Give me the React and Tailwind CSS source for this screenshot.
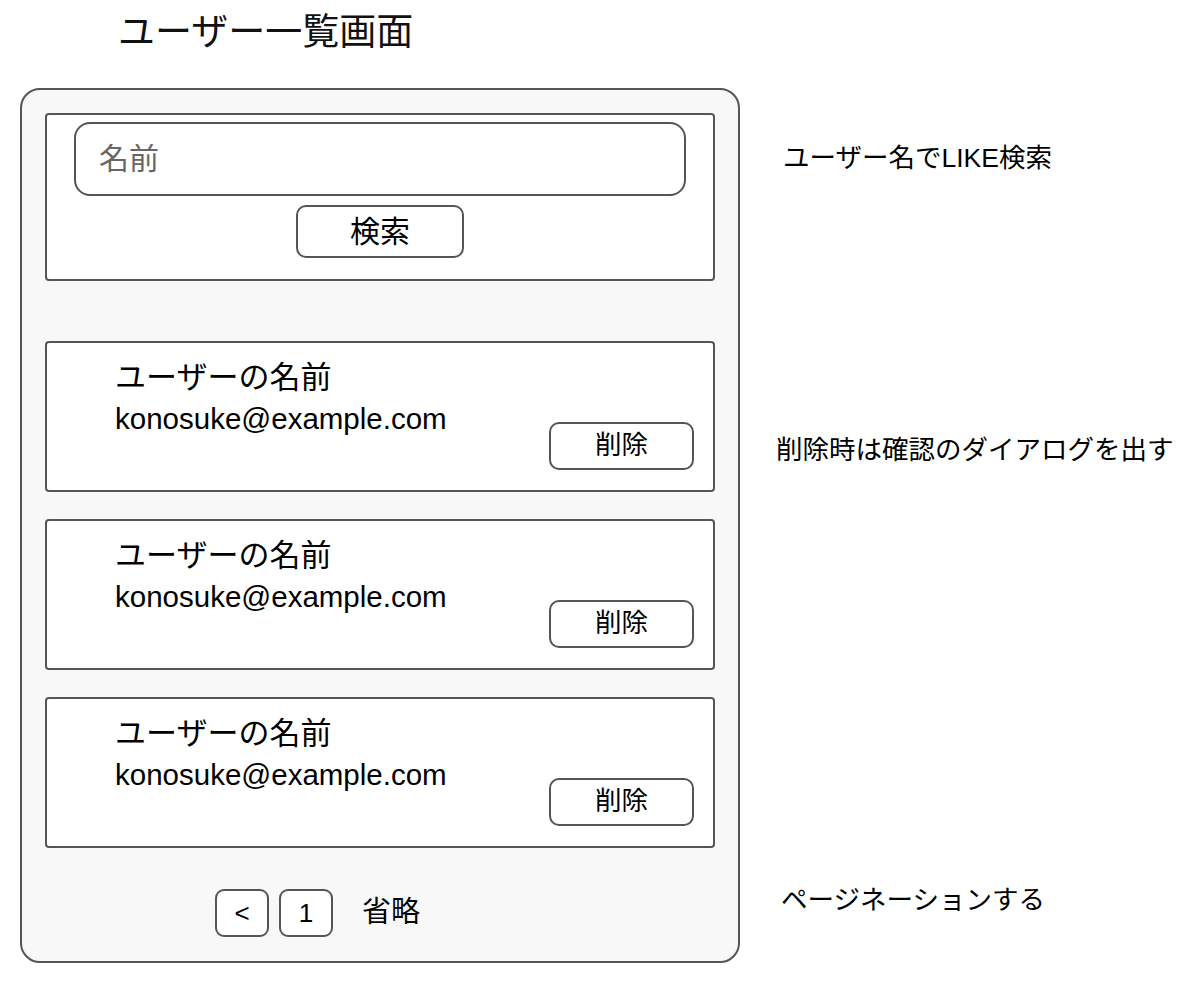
import React from 'react';

const users = [
    { name: 'ユーザーの名前', email: 'konosuke@example.com' },
    { name: 'ユーザーの名前', email: 'konosuke@example.com' },
    { name: 'ユーザーの名前', email: 'konosuke@example.com' },
];

function UserCard({ user }) {
    return (
        <div className="shrink-0 h-[151px] bg-white border-2 border-[#555] rounded-[4px] flex justify-between pl-[68px] pr-[19px] pb-[20px] pt-[16px]">
            <div className="self-start">
                <div className="text-[31px] leading-[38px] text-black whitespace-nowrap">{user.name}</div>
                <div className="text-[29.5px] leading-[36px] text-black mt-[4px] whitespace-nowrap">{user.email}</div>
            </div>
            <button className="self-end w-[145px] h-[48px] bg-white border-2 border-[#555] rounded-[10px] text-[26.5px] text-black">削除</button>
        </div>
    );
}

export default function App() {
    return (
        <div className="w-[1200px] h-[990px] bg-white font-['Liberation_Sans','Noto_Sans_CJK_JP',sans-serif] text-black">
            <div className="flex pt-[11px]">
                <div className="ml-[20px] w-[720px] shrink-0">
                    <h1 className="ml-[98px] text-[37px] leading-[43px] font-normal text-[#111] whitespace-nowrap">ユーザー一覧画面</h1>

                    <div className="mt-[34px] h-[875px] bg-[#f8f8f8] border-2 border-[#555] rounded-[20px] p-[23px] flex flex-col">
                        {/* 検索 */}
                        <div className="shrink-0 h-[168px] bg-white border-2 border-[#555] rounded-[4px] flex flex-col items-center pt-[7px]">
                            <input
                                className="w-[612px] h-[74px] border-2 border-[#555] rounded-[16px] pl-[23px] text-[30px] outline-none placeholder:text-[#666]"
                                placeholder="名前"
                            />
                            <button className="mt-[9px] w-[168px] h-[53px] bg-white border-2 border-[#555] rounded-[10px] text-[30px] text-black">検索</button>
                        </div>

                        {/* 一覧 */}
                        <div className="mt-[60px] flex flex-col gap-[27px] shrink-0">
                            {users.map((u, i) => <UserCard key={i} user={u} />)}
                        </div>

                        {/* ページネーション */}
                        <div className="mt-[41px] pl-[170px] flex items-center shrink-0">
                            <button className="w-[54px] h-[48px] bg-white border-2 border-[#555] rounded-[9px] text-[26px]">&lt;</button>
                            <button className="ml-[10px] w-[54px] h-[48px] bg-white border-2 border-[#555] rounded-[9px] text-[26px]">1</button>
                            <span className="ml-[29px] text-[29px]">省略</span>
                        </div>
                    </div>
                </div>

                <div className="ml-[37px] flex flex-col whitespace-nowrap">
                    <p className="mt-[131px] ml-[6px] text-[26.5px] leading-[32px]">ユーザー名でLIKE検索</p>
                    <p className="mt-[260px] -ml-[1px] text-[26.5px] leading-[32px]">削除時は確認のダイアログを出す</p>
                    <p className="mt-[418px] ml-[4px] text-[26.5px] leading-[32px]">ページネーションする</p>
                </div>
            </div>
        </div>
    );
}
